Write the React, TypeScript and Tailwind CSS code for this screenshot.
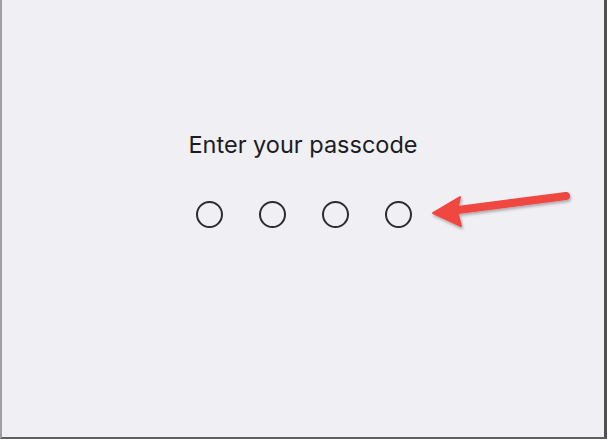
import React from "react";

export default function App() {
  return (
    <div className="w-[609px] h-[440px] bg-white relative overflow-hidden">
      <div className="w-[607px] h-[439px] bg-[#f0eff4] border-l-2 border-l-[#a0a0a0] border-r-[3px] border-r-[#505050] border-b-2 border-b-[#606060] flex flex-col items-center">
        <div className="mt-[130px] text-[23.5px] leading-[30px] text-[#1c1c1e]" style={{ fontFamily: "Inter, 'Noto Sans', sans-serif" }}>
          Enter your passcode
        </div>
        <div className="mt-[41px] flex gap-[36px] ml-[2px]">
          {[0, 1, 2, 3].map((i) => (
            <div key={i} className="w-[27px] h-[27px] rounded-full border-2 border-[#2c2c2e]" />
          ))}
        </div>
      </div>
      <svg className="absolute left-0 top-0" width="609" height="440" viewBox="0 0 609 440">
        <defs>
          <filter id="sh" x="-20%" y="-50%" width="140%" height="200%">
            <feDropShadow dx="1" dy="2" stdDeviation="1.5" floodColor="#000" floodOpacity="0.3" />
          </filter>
        </defs>
        <g filter="url(#sh)">
          <line x1="566" y1="196" x2="450" y2="211" stroke="#f0473f" strokeWidth="8" strokeLinecap="round" />
          <polygon points="433,213 460,197 457,211 461,226" fill="#f0473f" strokeLinejoin="round" stroke="#f0473f" strokeWidth="2" />
        </g>
      </svg>
    </div>
  );
}
